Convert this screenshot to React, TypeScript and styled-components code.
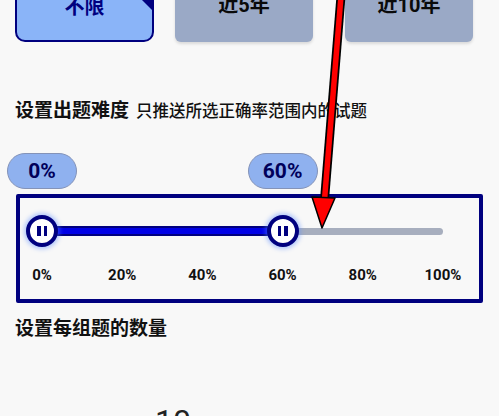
import React from 'react';
import styled, { createGlobalStyle } from 'styled-components';

const NAVY = '#00007f';
const TRACK_W = 401;

const GlobalStyle = createGlobalStyle`
  html, body {
    margin: 0;
    padding: 0;
    background: #f8f8f8;
    overflow: hidden;
  }
  body {
    font-family: Roboto, "Noto Sans CJK SC", sans-serif;
    color: #111;
  }
`;

const Page = styled.div`
  position: relative;
  width: 499px;
  height: 416px;
  overflow: hidden;
`;

const Content = styled.div`
  padding: 0 16px 0 15px;
`;

const YearRow = styled.div`
  display: flex;
  margin-top: -16px;
`;

const YearButton = styled.div<{ $active?: boolean; $w: number; $ml: number }>`
  position: relative;
  box-sizing: border-box;
  width: ${({ $w }) => $w}px;
  height: 58px;
  margin-left: ${({ $ml }) => $ml}px;
  padding-top: 11px;
  text-align: center;
  font-size: 20px;
  line-height: 20px;
  font-weight: 700;
  border-radius: ${({ $active }) => ($active ? '10px' : '6px')};
  background: ${({ $active }) => ($active ? '#8ab4f8' : '#9aa9c6')};
  color: ${({ $active }) => ($active ? NAVY : '#0a0a0a')};
  border: ${({ $active }) => ($active ? `2px solid ${NAVY}` : 'none')};
  box-shadow: ${({ $active }) => ($active ? 'none' : '0 2px 3px rgba(0,0,0,0.12)')};
  overflow: hidden;
`;

const CornerMark = styled.span`
  position: absolute;
  top: 0;
  right: 0;
  width: 0;
  height: 0;
  border-top: 24px solid ${NAVY};
  border-left: 24px solid transparent;
`;

const SectionTitle = styled.div<{ $mt: number }>`
  display: flex;
  align-items: baseline;
  gap: 7px;
  margin-top: ${({ $mt }) => $mt}px;
  font-size: 19px;
  line-height: 24px;
  font-weight: 700;
`;

const Hint = styled.span`
  font-size: 16.5px;
  font-weight: 500;
  color: #111;
`;

const BubbleRow = styled.div`
  position: relative;
  height: 36px;
  margin-top: 29px;
`;

const Bubble = styled.div`
  position: absolute;
  top: 0;
  box-sizing: border-box;
  width: 70px;
  height: 36px;
  border-radius: 18px;
  background: #8fb1ef;
  border: 1px solid #8493b8;
  display: flex;
  align-items: center;
  justify-content: center;
  font-size: 21px;
  font-weight: 700;
  color: #00005a;
`;

const SliderBox = styled.div`
  box-sizing: border-box;
  margin-top: 5px;
  margin-left: 1px;
  height: 109px;
  border: 4px solid ${NAVY};
  border-radius: 2px;
  padding: 18px 0 0 22px;
`;

const Track = styled.div`
  position: relative;
  width: ${TRACK_W}px;
  height: 30px;
  display: flex;
  align-items: center;
`;

const Rail = styled.div`
  width: 100%;
  height: 7px;
  border-radius: 4px;
  background: #a7aebe;
`;

const ActiveBar = styled.div`
  position: absolute;
  top: 10px;
  box-sizing: border-box;
  height: 10px;
  background: #0000e6;
  border: 2px solid ${NAVY};
`;

const Thumb = styled.div`
  position: absolute;
  top: -1px;
  box-sizing: border-box;
  width: 32px;
  height: 32px;
  margin-left: -16px;
  border-radius: 50%;
  background: #fff;
  border: 4.5px solid ${NAVY};
  box-shadow: 0 0 4px 2px rgba(90, 140, 255, 0.45);
  display: flex;
  align-items: center;
  justify-content: center;
  gap: 3px;
`;

const PauseBar = styled.span`
  width: 3.5px;
  height: 10px;
  background: ${NAVY};
`;

const TickRow = styled.div`
  width: ${TRACK_W}px;
  margin-top: 20px;
  display: flex;
  justify-content: space-between;
`;

const Tick = styled.div`
  width: 0;
  display: flex;
  justify-content: center;
  white-space: nowrap;
  font-size: 15px;
  line-height: 18px;
  font-weight: 700;
  color: #111;
`;

const CountValue = styled.div`
  margin-top: 60px;
  padding-left: 140px;
  font-size: 32px;
  line-height: 40px;
  color: #222;
`;

const Annotation = styled.svg`
  position: absolute;
  left: 0;
  top: 0;
  pointer-events: none;
`;

const years = [
  { label: '不限', w: 139, ml: 0, active: true },
  { label: '近5年', w: 138, ml: 21, active: false },
  { label: '近10年', w: 128, ml: 32, active: false },
];

const ticks = ['0%', '20%', '40%', '60%', '80%', '100%'];

export default function App() {
  const range = [0, 60];
  const px = (v: number) => (v / 100) * TRACK_W;

  return (
    <Page>
      <GlobalStyle />
      <Content>
        <YearRow>
          {years.map((y) => (
            <YearButton key={y.label} $active={y.active} $w={y.w} $ml={y.ml}>
              {y.label}
              {y.active && <CornerMark />}
            </YearButton>
          ))}
        </YearRow>

        <SectionTitle $mt={57}>
          设置出题难度
          <Hint>只推送所选正确率范围内的试题</Hint>
        </SectionTitle>

        <BubbleRow>
          {range.map((v) => (
            <Bubble key={v} style={{ left: 27 + px(v) - 35 }}>
              {v}%
            </Bubble>
          ))}
        </BubbleRow>

        <SliderBox>
          <Track>
            <Rail />
            <ActiveBar style={{ left: px(range[0]), width: px(range[1]) - px(range[0]) }} />
            {range.map((v) => (
              <Thumb key={v} style={{ left: px(v) }}>
                <PauseBar />
                <PauseBar />
              </Thumb>
            ))}
          </Track>
          <TickRow>
            {ticks.map((t) => (
              <Tick key={t}>{t}</Tick>
            ))}
          </TickRow>
        </SliderBox>

        <SectionTitle $mt={14}>设置每组题的数量</SectionTitle>

        <CountValue>10</CountValue>
      </Content>

      <Annotation width="499" height="416" viewBox="0 0 499 416">
        <line x1="341" y1="-4" x2="324.5" y2="200" stroke="#000" strokeWidth="9" />
        <line x1="341" y1="-4" x2="324.5" y2="200" stroke="#ff0000" strokeWidth="5.5" />
        <polygon points="312,197 335,198 322,228" fill="#ff0000" stroke="#000" strokeWidth="1.5" strokeLinejoin="round" />
      </Annotation>
    </Page>
  );
}
